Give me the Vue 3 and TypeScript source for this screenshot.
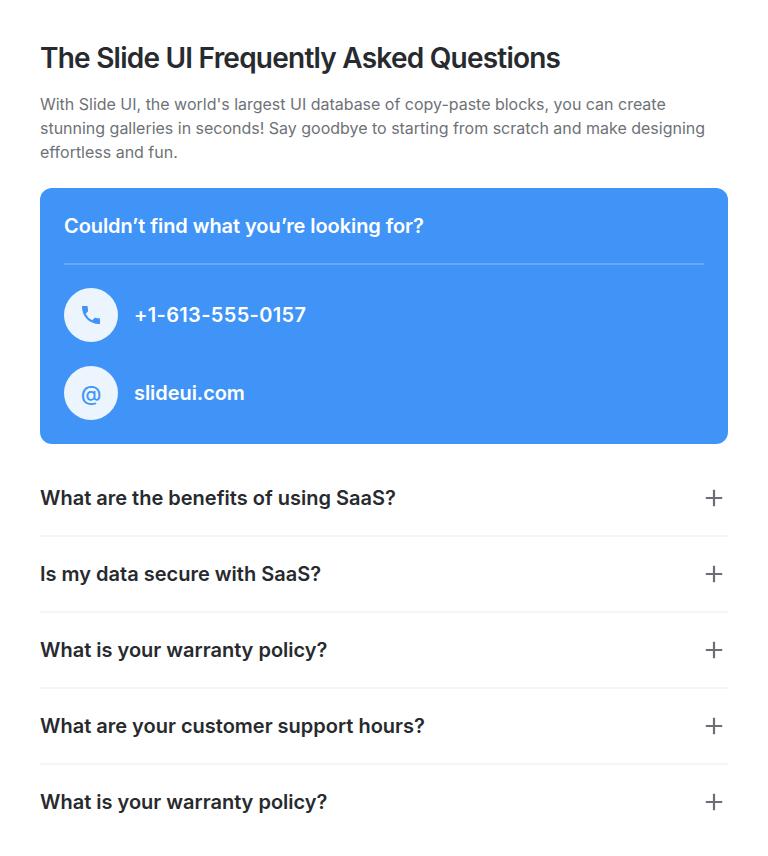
<script setup lang="ts">
interface Question {
  id: number
  title: string
}

const questions: Question[] = [
  { id: 1, title: 'What are the benefits of using SaaS?' },
  { id: 2, title: 'Is my data secure with SaaS?' },
  { id: 3, title: 'What is your warranty policy?' },
  { id: 4, title: 'What are your customer support hours?' },
  { id: 5, title: 'What is your warranty policy?' },
]
</script>

<template>
  <main class="faq">
    <h1 class="title">The Slide UI Frequently Asked Questions</h1>
    <p class="intro">
      With Slide UI, the world's largest UI database of copy-paste blocks, you can create<br />
      stunning galleries in seconds! Say goodbye to starting from scratch and make designing<br />
      effortless and fun.
    </p>
    <section class="card">
      <h2 class="card-title">Couldn’t find what you’re looking for?</h2>
      <div class="contact">
        <span class="badge">
          <svg width="24" height="24" viewBox="0 0 24 24" fill="currentColor">
            <path d="M21 15.46l-5.27-.61-2.52 2.52a15.045 15.045 0 0 1-6.59-6.59l2.53-2.53L8.54 3H3.03C2.45 13.18 10.82 21.55 21 20.97v-5.51z" />
          </svg>
        </span>
        <span class="contact-text phone">+1-613-555-0157</span>
      </div>
      <div class="contact">
        <span class="badge at">@</span>
        <span class="contact-text domain">slideui.com</span>
      </div>
    </section>
    <ul class="list">
      <li v-for="q in questions" :key="q.id" class="item">
        <span>{{ q.title }}</span>
        <svg class="plus" width="28" height="28" viewBox="0 0 28 28">
          <path d="M14 5.8v16.4M5.8 14h16.4" />
        </svg>
      </li>
    </ul>
  </main>
</template>

<style>
body {
  background: #fff;
}
</style>

<style scoped>
.faq {
  box-sizing: border-box;
  width: 768px;
  height: 856px;
  padding: 40px;
  font-family: Inter, sans-serif;
  color: #272a2e;
}
.title {
  margin: 0;
  font-size: 28px;
  line-height: 36px;
  font-weight: 600;
  letter-spacing: -0.77px;
  white-space: nowrap;
}
.intro {
  margin: 16px 0 24px;
  font-size: 16px;
  line-height: 24px;
  letter-spacing: -0.01px;
  color: #6e7277;
  white-space: nowrap;
}
.card {
  box-sizing: border-box;
  height: 256px;
  padding: 24px;
  display: flex;
  flex-direction: column;
  gap: 24px;
  border-radius: 12px;
  background: #4094f7;
  color: #fff;
}
.card-title {
  box-sizing: border-box;
  height: 53px;
  margin: 0 0 -1px;
  border-bottom: 2px solid #66a9f9;
  font-size: 20px;
  line-height: 28px;
  font-weight: 600;
  letter-spacing: -0.07px;
}
.contact {
  display: flex;
  align-items: center;
  gap: 16px;
  font-size: 20px;
  font-weight: 600;
}
.phone {
  letter-spacing: 0.33px;
}
.domain {
  letter-spacing: -0.06px;
}
.badge {
  display: flex;
  align-items: center;
  justify-content: center;
  width: 54px;
  height: 54px;
  border-radius: 50%;
  background: #ecf4fe;
  color: #4094f7;
}
.at {
  font-size: 21px;
  font-weight: 500;
}
.list {
  margin: 17px 0 0;
  padding: 0;
  list-style: none;
}
.item {
  box-sizing: border-box;
  height: 76px;
  display: flex;
  align-items: center;
  justify-content: space-between;
  border-bottom: 2px solid #f4f5f6;
  font-size: 20px;
  font-weight: 600;
}
.item:last-child {
  height: 74px;
  border-bottom: 0;
}
.plus {
  fill: none;
  stroke: #6b6e75;
  stroke-width: 2.2;
}
</style>
